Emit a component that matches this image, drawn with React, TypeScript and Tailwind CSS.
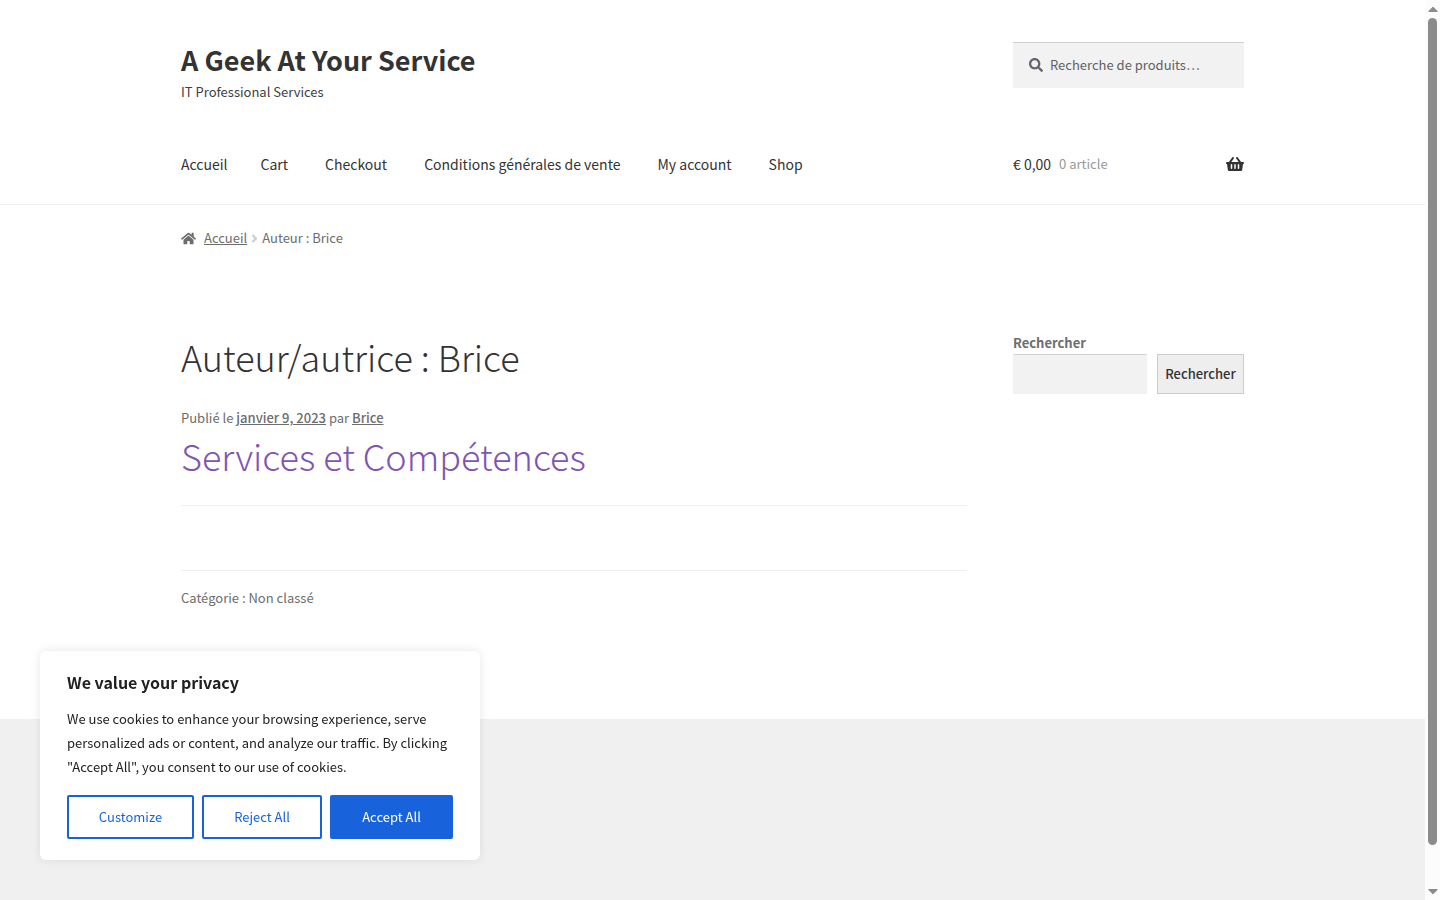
import { FaAngleRight, FaCaretDown, FaCaretUp, FaHome, FaSearch, FaShoppingBasket } from "react-icons/fa";

const navItems = [
  { label: "Cart", href: "#cart" },
  { label: "Checkout", href: "#checkout" },
  { label: "Conditions générales de vente", href: "#conditions" },
  { label: "My account", href: "#account" },
  { label: "Shop", href: "#shop" },
];

function Header() {
  return (
    <header className="border-b border-[#f0f0f0]">
      <div className="mx-auto max-w-[1063px] pt-[42px]">
        <div className="flex items-start justify-between">
          <div>
            <p className="pb-1 text-[27px] leading-9 font-bold text-[#333333]">
              <a href="#home">A Geek At Your Service</a>
            </p>
            <p className="text-[13px] leading-5 text-[#404040]">IT Professional Services</p>
          </div>
          <form role="search" className="flex h-[46px] w-[231px] items-center gap-[7px] border-t border-[#d2d2d2] bg-[#f2f2f2] pb-px pl-4">
            <FaSearch className="size-[14px] shrink-0 text-[#60646c]" aria-hidden="true" />
            <input
              type="search"
              aria-label="Recherche de produits"
              placeholder="Recherche de produits…"
              className="w-full min-w-0 bg-transparent text-[13px] leading-5 text-[#43454b] outline-none placeholder:text-[#616161]"
            />
          </form>
        </div>
        <div className="flex items-start justify-between pt-[50px] pb-7 text-[14px] leading-6 text-[#333333]">
          <nav aria-label="Navigation principale" className="flex gap-[37px]">
            <a href="#home" className="-mr-1">Accueil</a>
            {navItems.map((item) => (
              <a key={item.href} href={item.href}>{item.label}</a>
            ))}
          </nav>
          <a href="#cart" className="flex w-[231px] items-center">
            <span>€ 0,00</span>
            <span className="ml-2 text-[13px] text-[#999999]">0 article</span>
            <FaShoppingBasket className="ml-auto size-[18px]" aria-hidden="true" />
          </a>
        </div>
      </div>
    </header>
  );
}

function Breadcrumb() {
  return (
    <nav aria-label="Fil d’Ariane" className="flex items-center text-[13px] leading-5">
      <FaHome className="size-[15px] text-[#6d6d6d]" aria-hidden="true" />
      <a href="#home" className="ml-2 underline">Accueil</a>
      <FaAngleRight className="mx-px size-[13px] text-[#cccccc]" aria-hidden="true" />
      <span>Auteur : Brice</span>
    </nav>
  );
}

function Article() {
  return (
    <article>
      <p className="text-[13px] leading-5">
        Publié le <a href="#date" className="font-medium underline">janvier 9, 2023</a> par{" "}
        <a href="#brice" className="font-medium underline">Brice</a>
      </p>
      <h2 className="border-b border-[#f0f0f0] pt-[2px] pb-[25px] text-[36px] leading-[50px] font-light text-[#7f54b3]">
        <a href="#services">Services et Compétences</a>
      </h2>
      <p className="mt-16 border-t border-[#f0f0f0] pt-[17px] text-[13px] leading-5">
        Catégorie : <a href="#category">Non classé</a>
      </p>
    </article>
  );
}

function Sidebar() {
  return (
    <aside className="w-[231px] shrink-0 pt-[2px]">
      <form role="search" className="text-[13px] leading-5">
        <label htmlFor="sidebar-search" className="block font-bold">Rechercher</label>
        <div className="mt-px flex gap-[10px]">
          <input id="sidebar-search" type="search" className="h-10 w-0 flex-1 border border-[#f0f0f0] border-t-[#d2d2d2] bg-[#f2f2f2] px-2 outline-none" />
          <button type="button" className="h-10 w-[87px] border border-[#cccccc] bg-[#eeeeee] font-medium text-[#333333]">Rechercher</button>
        </div>
      </form>
    </aside>
  );
}

function CookieBanner() {
  return (
    <section aria-label="We value your privacy" className="fixed bottom-10 left-10 w-[440px] rounded-md bg-white px-[27px] pt-[19px] pb-[21px] text-[#212121] shadow-[0_0_10px_rgba(172,171,171,0.3)]">
      <h2 className="text-[16px] leading-6 font-bold">We value your privacy</h2>
      <p className="mt-[13px] text-[13px] leading-6">
        We use cookies to enhance your browsing experience, serve personalized ads or content, and analyze our traffic. By clicking "Accept All", you consent to our use of cookies.
      </p>
      <div className="mt-4 flex gap-2 text-[13px] leading-6 text-[#1863dc]">
        <button type="button" className="h-11 w-[127px] rounded-xs border-2 border-[#1863dc]">Customize</button>
        <button type="button" className="h-11 w-[120px] rounded-xs border-2 border-[#1863dc]">Reject All</button>
        <button type="button" className="h-11 flex-1 rounded-xs bg-[#1863dc] text-white">Accept All</button>
      </div>
    </section>
  );
}

function ScrollTrack() {
  return (
    <div aria-hidden="true" className="sticky top-0 flex h-screen w-[15px] shrink-0 flex-col items-center bg-[#fcfcfc] py-px text-[#8b8b8b]">
      <FaCaretUp className="mb-px h-4 w-4 shrink-0" />
      <div className="w-[9px] flex-1 rounded-full bg-[#8b8b8b]" />
      <div className="h-[38px] shrink-0" />
      <FaCaretDown className="h-4 w-4 shrink-0" />
    </div>
  );
}

export default function App() {
  return (
    <div className="flex bg-white font-['Noto_Sans_CJK_JP',sans-serif] text-[#6d6d6d]">
      <div className="flex min-h-screen min-w-0 flex-1 flex-col">
        <Header />
        <div className="mx-auto w-full max-w-[1063px] pt-[23px] pb-[111px]">
          <Breadcrumb />
          <div className="mt-[83px] flex items-start gap-[46px]">
            <main className="min-w-0 flex-1">
              <h1 className="mb-[27px] text-[36px] leading-[50px] font-light text-[#333333]">Auteur/autrice : Brice</h1>
              <Article />
            </main>
            <Sidebar />
          </div>
        </div>
        <footer className="flex-1 bg-[#f0f0f0]" />
      </div>
      <ScrollTrack />
      <CookieBanner />
    </div>
  );
}
